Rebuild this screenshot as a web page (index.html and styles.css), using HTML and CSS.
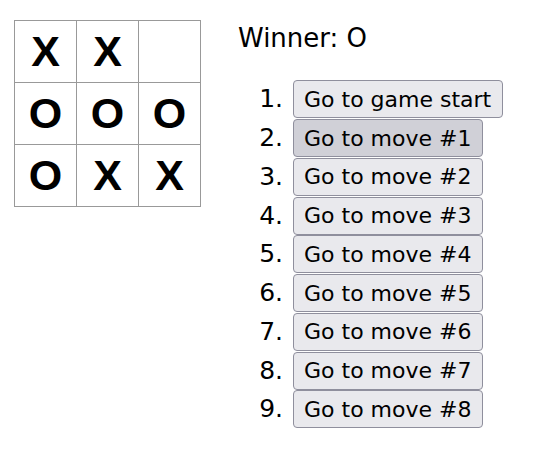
FILE: index.html
```html
<!DOCTYPE html>
<html>
<head>
<meta charset="utf-8">
<link rel="stylesheet" href="styles.css">
</head>
<body>
<div class="game">
  <div class="board">
    <div class="square">X</div>
    <div class="square">X</div>
    <div class="square"></div>
    <div class="square">O</div>
    <div class="square">O</div>
    <div class="square">O</div>
    <div class="square">O</div>
    <div class="square">X</div>
    <div class="square">X</div>
  </div>
  <div class="game-info">
    <div class="status">Winner: O</div>
    <ol class="moves">
      <li><button class="move">Go to game start</button></li>
      <li><button class="move hover">Go to move #1</button></li>
      <li><button class="move">Go to move #2</button></li>
      <li><button class="move">Go to move #3</button></li>
      <li><button class="move">Go to move #4</button></li>
      <li><button class="move">Go to move #5</button></li>
      <li><button class="move">Go to move #6</button></li>
      <li><button class="move">Go to move #7</button></li>
      <li><button class="move">Go to move #8</button></li>
    </ol>
  </div>
</div>
</body>
</html>
```
FILE: styles.css
```css
html, body {
  margin: 0;
  background: #fff;
}
body {
  padding: 20px 14px;
  font-family: "DejaVu Sans", sans-serif;
  color: #000;
}
.game {
  display: flex;
  align-items: flex-start;
}
.board {
  display: grid;
  grid-template-columns: repeat(3, 61px);
  grid-auto-rows: 61px;
  gap: 1px;
  background: #999;
  border: 1px solid #999;
}
.square {
  background: #fff;
  display: flex;
  align-items: center;
  justify-content: center;
  font-family: "Liberation Sans", Arial, sans-serif;
  font-weight: bold;
  font-size: 43px;
}
.game-info {
  margin-left: 37px;
}
.status {
  font-size: 26px;
  line-height: 36px;
  margin-bottom: 24px;
}
.moves {
  margin: 0;
  padding-left: 11px;
  font-size: 25px;
  list-style: none;
  counter-reset: move;
}
.moves li {
  height: 38.75px;
  display: flex;
  align-items: center;
  counter-increment: move;
}
.moves li::before {
  content: counter(move) ".";
  width: 34px;
  text-align: right;
  margin-right: 10px;
  line-height: 30px;
}
.move {
  height: 38px;
  margin: 0;
  padding: 0 11px 0 10px;
  font-family: "DejaVu Sans", sans-serif;
  font-size: 22px;
  color: #000;
  background: #e9e9ed;
  border: 1px solid #8f8f9d;
  border-radius: 4px;
}
.move.hover {
  background: #d0d0d7;
}
```
